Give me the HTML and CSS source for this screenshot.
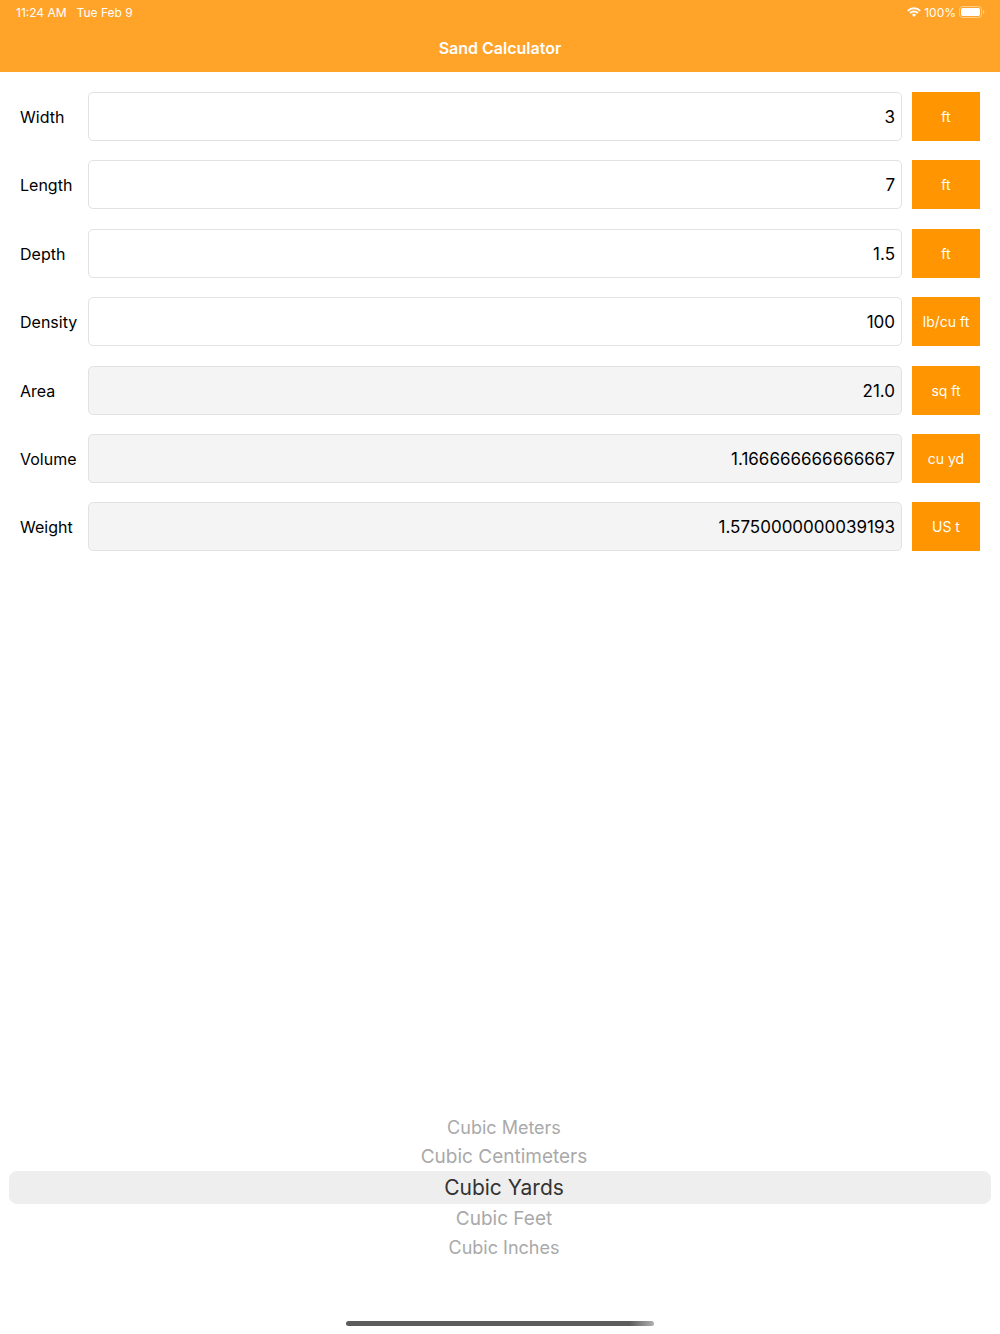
FILE: index.html
```html
<!DOCTYPE html>
<html lang="en">
<head>
  <meta charset="UTF-8" />
  <title>Sand Calculator</title>
  <meta name="viewport" content="width=device-width, initial-scale=1" />
  <link rel="stylesheet" href="styles.css">
</head>
<body>
  <header class="header">
    <div class="status-bar">
      <div class="status-group status-left">
        <span>11:24 AM</span>
        <span>Tue Feb 9</span>
      </div>
      <div class="status-group">
        <svg class="wifi" width="14" height="10" viewBox="0 0 14 10" fill="none" stroke="#fff" stroke-width="1.8">
          <path d="M0.8 3.8a8.8 8.8 0 0 1 12.4 0" />
          <path d="M3 6.2a5.6 5.6 0 0 1 8 0" />
          <path d="M7 9.9L4.9 7.8a3 3 0 0 1 4.2 0z" fill="#fff" stroke="none" />
        </svg>
        <span>100%</span>
        <svg class="battery" width="26" height="12" viewBox="0 0 26 12">
          <rect x="0.5" y="0.5" width="22" height="11" rx="3" fill="none" stroke="#fff" stroke-opacity="0.45" />
          <rect x="2" y="2" width="19" height="8" rx="1.8" fill="#fff" />
          <path d="M24 4v4c0.8-0.3 1.3-1.1 1.3-2s-0.5-1.7-1.3-2z" fill="#fff" fill-opacity="0.5" />
        </svg>
      </div>
    </div>
    <h1 class="title">Sand Calculator</h1>
  </header>

  <main class="main">
    <form class="calculator">
      <div class="fields">
        <div class="row">
          <label for="width">Width</label>
          <input type="text" id="width" inputmode="decimal" value="3" />
          <button type="button">ft</button>
        </div>
        <div class="row">
          <label for="length">Length</label>
          <input type="text" id="length" inputmode="decimal" value="7" />
          <button type="button">ft</button>
        </div>
      </div>

      <div class="fields">
        <div class="row">
          <label for="depth">Depth</label>
          <input type="text" id="depth" inputmode="decimal" value="1.5" />
          <button type="button">ft</button>
        </div>
        <div class="row">
          <label for="density">Density</label>
          <input type="text" id="density" inputmode="decimal" value="100" />
          <button type="button">lb/cu ft</button>
        </div>
      </div>

      <div class="fields">
        <div class="row">
          <label for="area">Area</label>
          <input type="text" id="area" value="21.0" readonly />
          <button type="button">sq ft</button>
        </div>
        <div class="row">
          <label for="volume">Volume</label>
          <input type="text" id="volume" value="1.166666666666667" readonly />
          <button type="button">cu yd</button>
        </div>
        <div class="row">
          <label for="weight">Weight</label>
          <input type="text" id="weight" value="1.5750000000039193" readonly />
          <button type="button">US t</button>
        </div>
      </div>
    </form>

    <div class="picker" role="radiogroup">
      <label class="option far"><input type="radio" name="unit" />Cubic Meters</label>
      <label class="option near"><input type="radio" name="unit" />Cubic Centimeters</label>
      <label class="option selected"><input type="radio" name="unit" checked />Cubic Yards</label>
      <label class="option near"><input type="radio" name="unit" />Cubic Feet</label>
      <label class="option far"><input type="radio" name="unit" />Cubic Inches</label>
    </div>
  </main>

  <div class="home-indicator"></div>
</body>
</html>
```
FILE: styles.css
```css
:root {
  --header: #ffa329;
  --unit: #ff9500;
  --border: #e2e2e2;
  --readonly: #f4f4f4;
  --muted: #a9a9a9;
}

* {
  box-sizing: border-box;
}

body {
  margin: 0;
  min-height: 100vh;
  display: flex;
  flex-direction: column;
  background-color: #fff;
  color: #000;
  font-family: Inter, "Liberation Sans", sans-serif;
}

.header {
  background-color: var(--header);
  color: #fff;
}

.status-bar {
  display: flex;
  justify-content: space-between;
  height: 24px;
  padding: 0 15px 0 16px;
  font-size: 12px;
}

.status-group {
  display: flex;
  align-items: center;
  gap: 3px;
}

.status-left {
  gap: 10px;
}

.title {
  margin: 0;
  font-size: 16px;
  font-weight: 600;
  line-height: 48px;
  text-align: center;
}

.main {
  flex: 1;
  display: flex;
  flex-direction: column;
  justify-content: space-between;
}

.calculator {
  display: flex;
  flex-direction: column;
  gap: 20px;
  padding: 20px;
}

.fields {
  display: flex;
  flex-direction: column;
  gap: 19px;
}

.row {
  display: flex;
  height: 49px;
}

.row label {
  width: 68px;
  font-size: 16px;
  line-height: 50px;
}

.row input {
  flex: 1;
  min-width: 0;
  margin-right: 10px;
  padding: 0 6px;
  border: 1px solid var(--border);
  border-radius: 5px;
  background-color: #fff;
  color: #000;
  font-family: inherit;
  font-size: 17px;
  text-align: right;
}

.row input:read-only {
  background-color: var(--readonly);
}

.row button {
  width: 68px;
  padding: 0;
  border: none;
  background-color: var(--unit);
  color: #fff;
  font-family: inherit;
  font-size: 14px;
}

.picker {
  display: flex;
  flex-direction: column;
  padding: 0 9px 59px;
}

.option {
  padding-left: 8px;
  line-height: 29px;
  text-align: center;
  color: var(--muted);
}

.option input {
  appearance: none;
  position: absolute;
  margin: 0;
}

.far {
  font-size: 18px;
}

.near {
  font-size: 19px;
}

.selected {
  border-radius: 8px;
  background-color: #eee;
  color: #333;
  font-size: 21px;
  line-height: 33px;
}

.home-indicator {
  width: 308px;
  height: 5px;
  margin: 0 auto 8px;
  border-radius: 3px;
  background: linear-gradient(to right, #5c5c5c 92%, #b0b0b0);
}
```
